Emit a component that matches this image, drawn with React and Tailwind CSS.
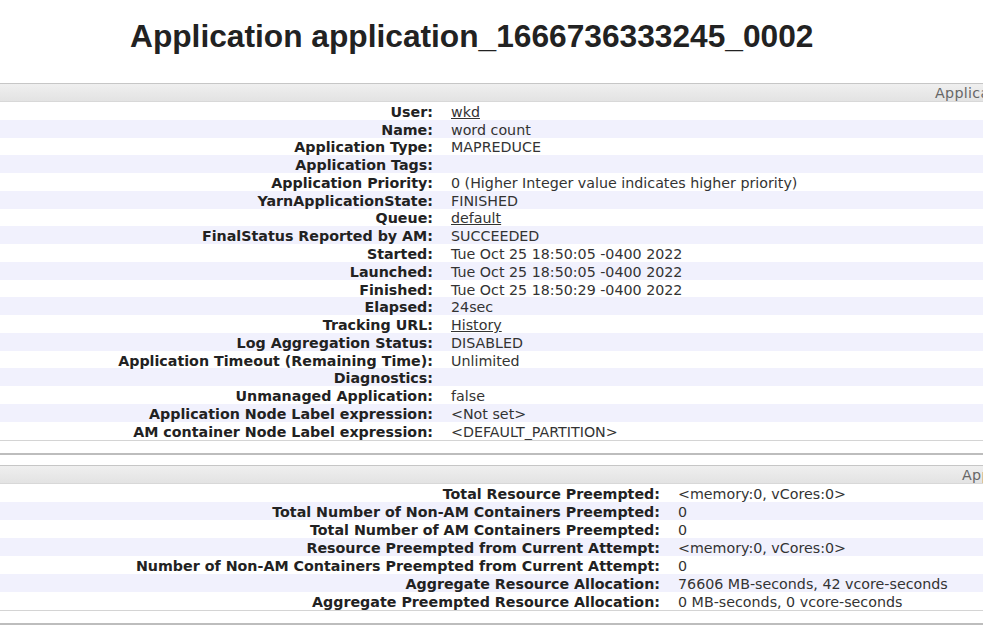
import React from 'react';

const overview = [
  ['User:', 'wkd', true],
  ['Name:', 'word count'],
  ['Application Type:', 'MAPREDUCE'],
  ['Application Tags:', ''],
  ['Application Priority:', '0 (Higher Integer value indicates higher priority)'],
  ['YarnApplicationState:', 'FINISHED'],
  ['Queue:', 'default', true],
  ['FinalStatus Reported by AM:', 'SUCCEEDED'],
  ['Started:', 'Tue Oct 25 18:50:05 -0400 2022'],
  ['Launched:', 'Tue Oct 25 18:50:05 -0400 2022'],
  ['Finished:', 'Tue Oct 25 18:50:29 -0400 2022'],
  ['Elapsed:', '24sec'],
  ['Tracking URL:', 'History', true],
  ['Log Aggregation Status:', 'DISABLED'],
  ['Application Timeout (Remaining Time):', 'Unlimited'],
  ['Diagnostics:', ''],
  ['Unmanaged Application:', 'false'],
  ['Application Node Label expression:', '<Not set>'],
  ['AM container Node Label expression:', '<DEFAULT_PARTITION>'],
];

const metrics = [
  ['Total Resource Preempted:', '<memory:0, vCores:0>'],
  ['Total Number of Non-AM Containers Preempted:', '0'],
  ['Total Number of AM Containers Preempted:', '0'],
  ['Resource Preempted from Current Attempt:', '<memory:0, vCores:0>'],
  ['Number of Non-AM Containers Preempted from Current Attempt:', '0'],
  ['Aggregate Resource Allocation:', '76606 MB-seconds, 42 vcore-seconds'],
  ['Aggregate Preempted Resource Allocation:', '0 MB-seconds, 0 vcore-seconds'],
];

const InfoBlock = ({ title, titleOffset, rows, labelWidth, rowHeight }) => (
  <div>
    <div className="border-t border-[#c6c6c6]">
      <div className="h-[18px] bg-gradient-to-b from-[#efefef] to-[#e3e3e3] border-b border-[#d8d8d8] whitespace-nowrap overflow-hidden text-[14.25px] leading-[18px] text-[#666] tracking-[0.3px]">
        <span className={titleOffset}>{title}</span>
      </div>
      {rows.map(([label, value, link], i) => (
        <div
          key={label}
          className={`flex items-center pt-[3px] ${rowHeight} ${i % 2 === 1 ? 'bg-[#f1f1fd]' : 'bg-white'}`}
        >
          <div className={`${labelWidth} shrink-0 text-right pr-[7px] font-bold text-[#222] whitespace-nowrap`}>
            {label}
          </div>
          <div className="pl-[11px] text-[#333] whitespace-nowrap">
            {link ? <span className="underline">{value}</span> : value}
          </div>
        </div>
      ))}
    </div>
    <div className="border-t border-[#d4d4d4] h-[13px]" />
    <div className="border-t-2 border-[#bdbdbd] h-[12px]" />
  </div>
);

export default function App() {
  return (
    <div
      className="w-[983px] h-[630px] overflow-hidden bg-white text-[14.25px] leading-[17px]"
      style={{ fontFamily: '"DejaVu Sans", Verdana, sans-serif' }}
    >
      <div className="h-[83px] pt-[17px] pl-[130px]">
        <h1
          className="text-[31.7px] leading-[38px] font-bold text-[#222] whitespace-nowrap"
          style={{ fontFamily: '"Liberation Sans", Arial, sans-serif' }}
        >
          Application application_1666736333245_0002
        </h1>
      </div>
      <InfoBlock
        title="Application Overview"
        titleOffset="pl-[935px]"
        rows={overview}
        labelWidth="w-[440px]"
        rowHeight="h-[17.78px]"
      />
      <InfoBlock
        title="Application Metrics"
        titleOffset="pl-[962px]"
        rows={metrics}
        labelWidth="w-[667px]"
        rowHeight="h-[18px]"
      />
    </div>
  );
}
